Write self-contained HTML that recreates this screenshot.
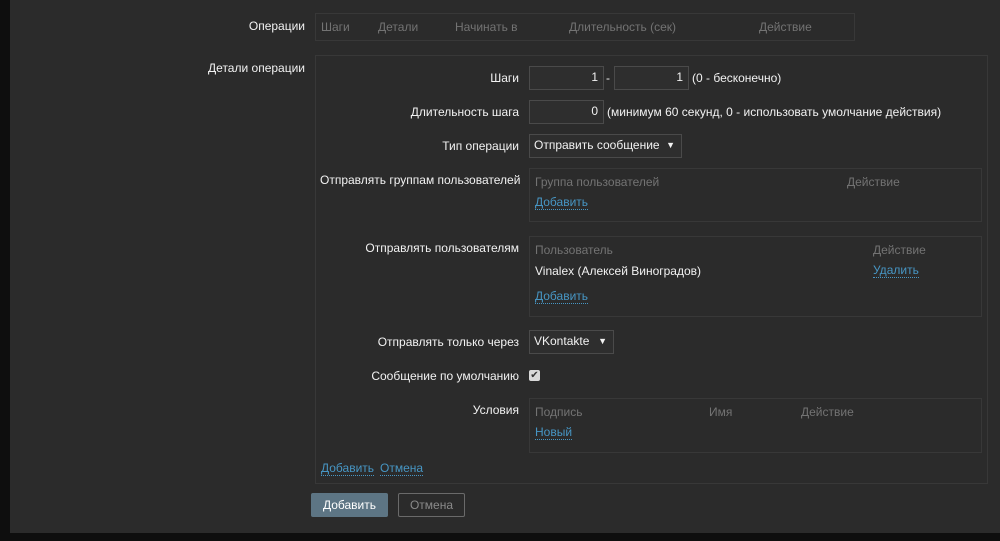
<!DOCTYPE html>
<html><head><meta charset="utf-8"><style>
body{margin:0;width:1000px;height:541px;background:#0e0e0e;position:relative;overflow:hidden;font-family:"Liberation Sans",Arial,sans-serif;font-size:12px;color:#f2f2f2}
#main{position:absolute;left:10px;top:0;width:990px;height:533px;background:#2b2b2b}
.a{position:absolute;white-space:nowrap}
.r{text-align:right}
.box{position:absolute;border:1px solid #383838;box-sizing:border-box}
.g{color:#737373}
.lnk{color:#4796c4;border-bottom:1px dotted #4796c4;line-height:13px}
.inp{position:absolute;background:#2b2b2b;border:1px solid #4a4a4a;box-sizing:border-box;text-align:right;padding-right:5px;line-height:21px;background:#2e2e2e}
.sel{position:absolute;border:1px solid #4a4a4a;box-sizing:border-box;line-height:21px;padding-left:4px;background:#2e2e2e}
</style></head><body>
<div id="main"></div>
<div class="a r" style="left:150px;width:155px;top:19px">Операции</div>
<div class="box" style="left:315px;top:13px;width:540px;height:28px"></div>
<div class="a g" style="left:321px;top:20px">Шаги</div>
<div class="a g" style="left:378px;top:20px">Детали</div>
<div class="a g" style="left:455px;top:20px">Начинать в</div>
<div class="a g" style="left:569px;top:20px">Длительность (сек)</div>
<div class="a g" style="left:759px;top:20px">Действие</div>

<div class="a r" style="left:150px;width:155px;top:61px">Детали операции</div>
<div class="box" style="left:315px;top:55px;width:673px;height:429px"></div>

<div class="a r" style="left:320px;width:199px;top:71px">Шаги</div>
<div class="inp" style="left:529px;top:66px;width:75px;height:24px">1</div>
<div class="a" style="left:606px;top:71px">-</div>
<div class="inp" style="left:614px;top:66px;width:75px;height:24px">1</div>
<div class="a" style="left:692px;top:71px">(0 - бесконечно)</div>

<div class="a r" style="left:320px;width:199px;top:105px">Длительность шага</div>
<div class="inp" style="left:529px;top:100px;width:75px;height:24px">0</div>
<div class="a" style="left:607px;top:105px">(минимум 60 секунд, 0 - использовать умолчание действия)</div>

<div class="a r" style="left:320px;width:199px;top:139px">Тип операции</div>
<div class="sel" style="left:529px;top:134px;width:153px;height:24px">Отправить сообщение <span style="position:absolute;right:6px;font-size:9px">▼</span></div>

<div class="a r" style="left:320px;width:199px;top:173px">Отправлять группам пользователей</div>
<div class="box" style="left:529px;top:168px;width:453px;height:54px"></div>
<div class="a g" style="left:535px;top:175px">Группа пользователей</div>
<div class="a g" style="left:847px;top:175px">Действие</div>
<div class="a lnk" style="left:535px;top:196px">Добавить</div>

<div class="a r" style="left:320px;width:199px;top:241px">Отправлять пользователям</div>
<div class="box" style="left:529px;top:236px;width:453px;height:81px"></div>
<div class="a g" style="left:535px;top:243px">Пользователь</div>
<div class="a g" style="left:873px;top:243px">Действие</div>
<div class="a" style="left:535px;top:264px">Vinalex (Алексей Виноградов)</div>
<div class="a lnk" style="left:873px;top:264px">Удалить</div>
<div class="a lnk" style="left:535px;top:290px">Добавить</div>

<div class="a r" style="left:320px;width:199px;top:335px">Отправлять только через</div>
<div class="sel" style="left:529px;top:330px;width:85px;height:24px">VKontakte <span style="position:absolute;right:6px;font-size:9px">▼</span></div>

<div class="a r" style="left:320px;width:199px;top:369px">Сообщение по умолчанию</div>
<div class="a" style="left:529px;top:370px;width:11px;height:11px;background:#d8d8d8;border-radius:2px;color:#333;font-size:10px;line-height:11px;text-align:center">✔</div>

<div class="a r" style="left:320px;width:199px;top:403px">Условия</div>
<div class="box" style="left:529px;top:398px;width:453px;height:55px"></div>
<div class="a g" style="left:535px;top:405px">Подпись</div>
<div class="a g" style="left:709px;top:405px">Имя</div>
<div class="a g" style="left:801px;top:405px">Действие</div>
<div class="a lnk" style="left:535px;top:426px">Новый</div>

<div class="a lnk" style="left:321px;top:462px">Добавить</div>
<div class="a lnk" style="left:380px;top:462px">Отмена</div>

<div class="a" style="left:311px;top:493px;width:77px;height:24px;background:#5d7584;border-radius:2px;text-align:center;line-height:24px;color:#fff">Добавить</div>
<div class="a" style="left:398px;top:493px;width:67px;height:24px;border:1px solid #6a6a6a;box-sizing:border-box;border-radius:2px;text-align:center;line-height:22px;color:#8a8a8a">Отмена</div>
</body></html>
